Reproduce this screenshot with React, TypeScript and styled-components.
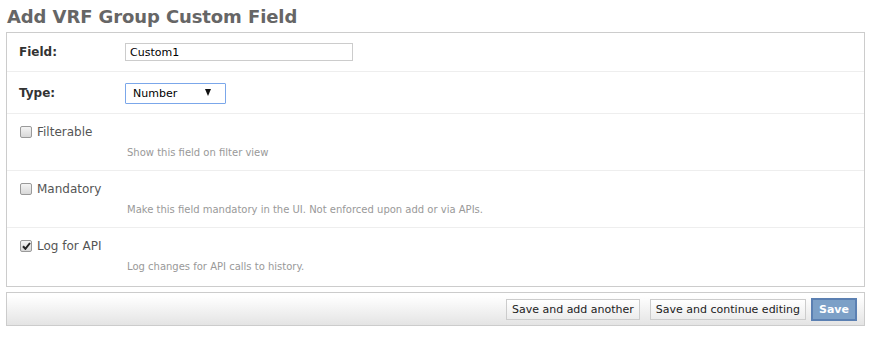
import React from "react"
import styled, { createGlobalStyle } from "styled-components"

const GlobalStyle = createGlobalStyle`
    body {
        margin: 0;
        background: #fff;
        font-family: "DejaVu Sans", Verdana, sans-serif;
        color: #333;
    }
`

const Page = styled.div`
    padding: 0 11px 0 6px;
`

const Title = styled.h1`
    margin: 0;
    padding: 7px 0 6px 1px;
    font-size: 18px;
    line-height: 19px;
    font-weight: bold;
    color: #666;
    letter-spacing: -0.1px;
`

const Fieldset = styled.div`
    border: 1px solid #ccc;
    display: flex;
    flex-direction: column;
`

const Row = styled.div<{ $last?: boolean }>`
    display: flex;
    flex-direction: column;
    padding: ${({ $last }) => ($last ? "10px 12px 12px" : "10px 12px")};
    border-bottom: ${({ $last }) => ($last ? "none" : "1px solid #eee")};
`

const Line = styled.div`
    display: flex;
    align-items: center;
    min-height: 18px;
`

const Label = styled.label`
    width: 106px;
    flex-shrink: 0;
    font-size: 12px;
    font-weight: bold;
    color: #333;
`

const TextInput = styled.input`
    box-sizing: border-box;
    width: 228px;
    height: 18px;
    border: 1px solid #ccc;
    padding: 0 4px;
    font-family: "DejaVu Sans", Verdana, sans-serif;
    font-size: 11px;
    color: #000;
    outline: none;
`

const SelectWrap = styled.div`
    position: relative;
    width: 101px;
    height: 21px;
`

const Select = styled.select`
    box-sizing: border-box;
    width: 100%;
    height: 100%;
    appearance: none;
    border: 1px solid #7ba7ea;
    border-radius: 1px;
    background: #fff;
    padding: 0 0 0 7px;
    font-family: "DejaVu Sans", Verdana, sans-serif;
    font-size: 11px;
    color: #000;
    outline: none;
`

const Arrow = styled.span`
    position: absolute;
    right: 15px;
    top: 7px;
    width: 0;
    height: 0;
    border-left: 3.5px solid transparent;
    border-right: 3.5px solid transparent;
    border-top: 7px solid #111;
    pointer-events: none;
`

const CheckLabel = styled.label`
    display: flex;
    align-items: center;
    gap: 5px;
    height: 16px;
    font-size: 12px;
    color: #555;
`

const Box = styled.span`
    box-sizing: border-box;
    width: 12px;
    height: 12px;
    margin-left: 1px;
    border: 1px solid #9a9a9a;
    border-radius: 2px;
    background: linear-gradient(#f4f4f4, #d8d8d8);
    display: flex;
    align-items: center;
    justify-content: center;
`

const Help = styled.div`
    margin: 6px 0 0 108px;
    font-size: 10px;
    line-height: 14px;
    color: #999;
`

const SubmitRow = styled.div`
    margin-top: 5px;
    height: 34px;
    box-sizing: border-box;
    border: 1px solid #ccc;
    background: linear-gradient(#fff 10%, #e4e4e4);
    display: flex;
    align-items: center;
    justify-content: flex-end;
    padding-right: 7px;
`

const Button = styled.button`
    box-sizing: border-box;
    height: 21px;
    margin-left: 10px;
    padding: 0 5px;
    border: 1px solid #ccc;
    background: linear-gradient(#fff, #ececec);
    font-family: "DejaVu Sans", Verdana, sans-serif;
    font-size: 11px;
    color: #222;
`

const DefaultButton = styled.button`
    box-sizing: border-box;
    height: 23px;
    margin-left: 5px;
    padding: 0 6px;
    border: 2px solid #5b80b2;
    background: #7ca0c7;
    font-family: "DejaVu Sans", Verdana, sans-serif;
    font-size: 11px;
    font-weight: bold;
    color: #fff;
`

const Check = () => (
    <svg width="9" height="8" viewBox="0 0 9 8">
        <path d="M1 4.2 L3.4 6.8 L8 1" fill="none" stroke="#222" strokeWidth="2" />
    </svg>
)

const Checkbox: React.FC<{ label: string; help: string; checked?: boolean; last?: boolean }> = ({
    label,
    help,
    checked,
    last,
}) => (
    <Row $last={last}>
        <CheckLabel>
            <Box>{checked && <Check />}</Box>
            {label}
        </CheckLabel>
        <Help>{help}</Help>
    </Row>
)

const App: React.FC = () => {
    return (
        <Page>
            <GlobalStyle />
            <Title>Add VRF Group Custom Field</Title>
            <Fieldset>
                <Row>
                    <Line>
                        <Label>Field:</Label>
                        <TextInput defaultValue="Custom1" />
                    </Line>
                </Row>
                <Row>
                    <Line>
                        <Label>Type:</Label>
                        <SelectWrap>
                            <Select defaultValue="number">
                                <option value="number">Number</option>
                                <option value="text">Text</option>
                            </Select>
                            <Arrow />
                        </SelectWrap>
                    </Line>
                </Row>
                <Checkbox label="Filterable" help="Show this field on filter view" />
                <Checkbox label="Mandatory" help="Make this field mandatory in the UI. Not enforced upon add or via APIs." />
                <Checkbox label="Log for API" help="Log changes for API calls to history." checked last />
            </Fieldset>
            <SubmitRow>
                <Button>Save and add another</Button>
                <Button>Save and continue editing</Button>
                <DefaultButton>Save</DefaultButton>
            </SubmitRow>
        </Page>
    )
}

export default App
